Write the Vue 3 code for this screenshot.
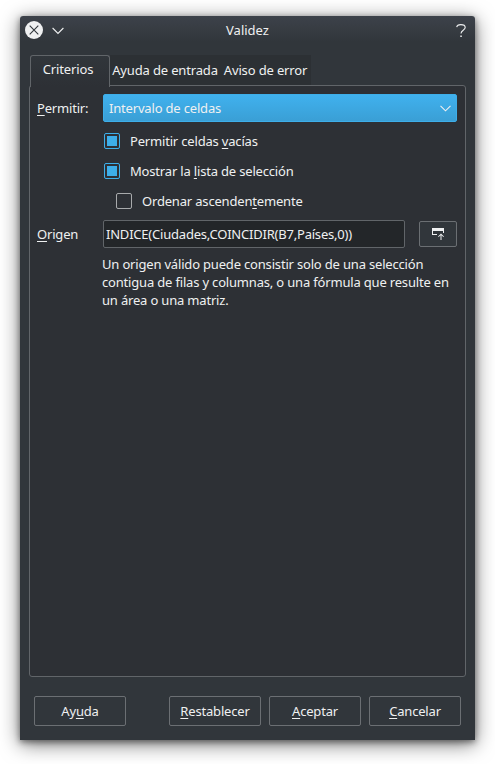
<script setup>
import { ref } from 'vue'

const tabs = ['Criterios', 'Ayuda de entrada', 'Aviso de error']
const activeTab = ref(0)
const source = ref('INDICE(Ciudades,COINCIDIR(B7,Países,0))')
const options = ref([
  { before: 'Permitir celdas ', key: 'v', after: 'acías', checked: true, nested: false },
  { before: 'Mostrar la ', key: 'l', after: 'ista de selección', checked: true, nested: false },
  { before: 'Ordenar ascenden', key: 't', after: 'emente', checked: false, nested: true }
])
const buttons = [
  { before: 'Ay', key: 'u', after: 'da' },
  { before: '', key: 'R', after: 'establecer' },
  { before: '', key: 'A', after: 'ceptar' },
  { before: '', key: 'C', after: 'ancelar' }
]
</script>

<template>
  <main class="desktop">
    <section class="window">
      <header class="titlebar">
        <svg class="close" width="18" height="18" viewBox="0 0 18 18">
          <circle cx="9" cy="9" r="9" fill="#eff0f1" />
          <path d="M4.700 4.700l8.600 8.600M13.300 4.700l-8.600 8.600" stroke="#31363b" stroke-width="1.1" />
        </svg>
        <svg class="shade" width="12" height="8" viewBox="0 0 12 8">
          <path d="M.6 1l5.400 5.400L11.400 1" fill="none" stroke="#eff0f1" stroke-width="1.1" />
        </svg>
        <h1>Validez</h1>
        <svg class="help" width="10" height="14" viewBox="0 0 10 14">
          <path d="M.7 3.200C1 1.400 2.500.6 4.800.6C7.400.6 9.200 1.600 9.200 3.500C9.200 6.300 5 6.300 5 9.500" fill="none" stroke="#eff0f1" stroke-width="1.1" />
          <rect x="4.300" y="11.500" width="1.500" height="1.500" fill="#eff0f1" />
        </svg>
      </header>

      <nav class="tabs">
        <div
          v-for="(tab, i) in tabs"
          :key="tab"
          class="tab"
          :class="{ active: i === activeTab }"
          @click="activeTab = i"
        >{{ tab }}</div>
      </nav>

      <div class="panel">
        <div class="row">
          <label><u>P</u>ermitir:</label>
          <div class="combo">
            <span>Intervalo de celdas</span>
            <svg width="11" height="7" viewBox="0 0 11 7">
              <path d="M.5.8l5 5 5-5" fill="none" stroke="#eff0f1" stroke-width="1.1" />
            </svg>
          </div>
        </div>
        <div class="options">
          <div
            v-for="o in options"
            :key="o.after"
            class="option"
            :class="{ nested: o.nested, checked: o.checked }"
            @click="o.checked = !o.checked"
          >
            <i class="box"></i>
            <span>{{ o.before }}<u>{{ o.key }}</u>{{ o.after }}</span>
          </div>
        </div>
        <div class="row">
          <label><u>O</u>rigen</label>
          <input v-model="source" class="field" type="text" spellcheck="false" />
          <button class="picker">
            <svg width="14" height="14" viewBox="0 0 14 14" fill="#eff0f1">
              <path d="M1 1h12v5h-1V4H2v3h4v1H1z" />
              <path d="M9.500 13V8.300L7.700 10.100l-.7-.7L10 6.400l3 3-.7.7-1.800-1.800V13z" />
            </svg>
          </button>
        </div>
        <p class="hint">Un origen válido puede consistir solo de una selección<br />contigua de filas y columnas, o una fórmula que resulte en<br />un área o una matriz.</p>
      </div>

      <footer class="actions">
        <button v-for="b in buttons" :key="b.key" class="action">
          <span>{{ b.before }}<u>{{ b.key }}</u>{{ b.after }}</span>
        </button>
      </footer>
    </section>
  </main>
</template>

<style>
body {
  margin: 0;
  background: #fff;
}
</style>

<style scoped>
* {
  box-sizing: border-box;
}
.desktop {
  width: 495px;
  height: 764px;
  padding: 16px 20px 24px;
  overflow: hidden;
  background: #fff;
  font-family: "Noto Sans", sans-serif;
  font-size: 13px;
  letter-spacing: -0.18px;
  line-height: 18px;
  color: #eff0f1;
}
.window {
  width: 455px;
  height: 724px;
  display: flex;
  flex-direction: column;
  border-radius: 3px 3px 0 0;
  background: linear-gradient(#3d424a 0, #31363b 26px);
  box-shadow: 0 4px 20px rgba(0, 0, 0, 0.55), 0 2px 6px rgba(0, 0, 0, 0.45);
}
.titlebar {
  height: 39px;
  padding: 5px 9px 0 5px;
  display: flex;
  align-items: flex-start;
}
.shade {
  margin: 6px 0 0 9px;
}
.titlebar h1 {
  flex: 1;
  margin: 0;
  padding-right: 25px;
  text-align: center;
  font-size: 13px;
  font-weight: 400;
  letter-spacing: 0;
}
.help {
  margin-top: 3px;
}
.tabs {
  height: 30px;
  padding-left: 10px;
  display: flex;
}
.tab {
  width: 110px;
  height: 30px;
  padding-top: 6px;
  background: #2c3034;
  text-align: center;
  white-space: nowrap;
  letter-spacing: -0.15px;
}
.tab:last-child {
  width: 91px;
}
.tab.active {
  position: relative;
  width: 80px;
  height: 32px;
  padding: 4px 4px 0 0;
  border: 1px solid #616569;
  border-bottom: 0;
  border-radius: 3px 3px 0 0;
  background: linear-gradient(#31363b, #2d3035);
}
.panel {
  width: 437px;
  height: 592px;
  margin-left: 9px;
  padding: 8px 8px 0 7px;
  border: 1px solid #616569;
  border-radius: 3px;
  background: #2d3035;
}
.row {
  display: flex;
  align-items: center;
  height: 28px;
}
.row label {
  width: 66px;
}
u {
  text-decoration: underline;
  text-decoration-thickness: 1px;
  text-underline-offset: 2px;
  text-decoration-skip-ink: none;
}
.combo {
  flex: 1;
  height: 28px;
  padding: 0 5px;
  display: flex;
  align-items: center;
  justify-content: space-between;
  border: 1px solid #3daee9;
  border-radius: 2px;
  background: linear-gradient(#40b1ee, #3a9fd5);
}
.options {
  padding: 4px 0 4px 67px;
}
.option {
  height: 30px;
  display: flex;
  align-items: center;
  gap: 10px;
}
.option.nested {
  padding-left: 12px;
}
.box {
  width: 16px;
  height: 16px;
  padding: 2px;
  border: 1px solid #a8aaac;
  border-radius: 2px;
}
.checked .box {
  border-color: #3daee9;
}
.checked .box::before {
  content: "";
  display: block;
  width: 10px;
  height: 10px;
  background: #3daee9;
}
.field {
  width: 302px;
  height: 28px;
  padding: 0 2px;
  border: 1px solid #616569;
  border-radius: 2px;
  outline: 0;
  background: #232629;
  color: #eff0f1;
  font: inherit;
  letter-spacing: -0.21px;
}
.picker {
  width: 38px;
  height: 26px;
  margin-left: 14px;
  padding: 0;
  display: flex;
  align-items: center;
  justify-content: center;
  border: 1px solid #6b6f73;
  border-radius: 2px;
  background: #31363b;
}
.hint {
  margin: 7px 0 0 65px;
  white-space: nowrap;
}
.actions {
  display: flex;
  gap: 8px;
  padding: 19px 14px 0;
}
.action {
  width: 92px;
  height: 30px;
  padding: 0;
  border: 1px solid #6b6f73;
  border-radius: 2px;
  background: #31363b;
  color: inherit;
  font: inherit;
  letter-spacing: inherit;
}
.action:first-child {
  margin-right: auto;
}
</style>
